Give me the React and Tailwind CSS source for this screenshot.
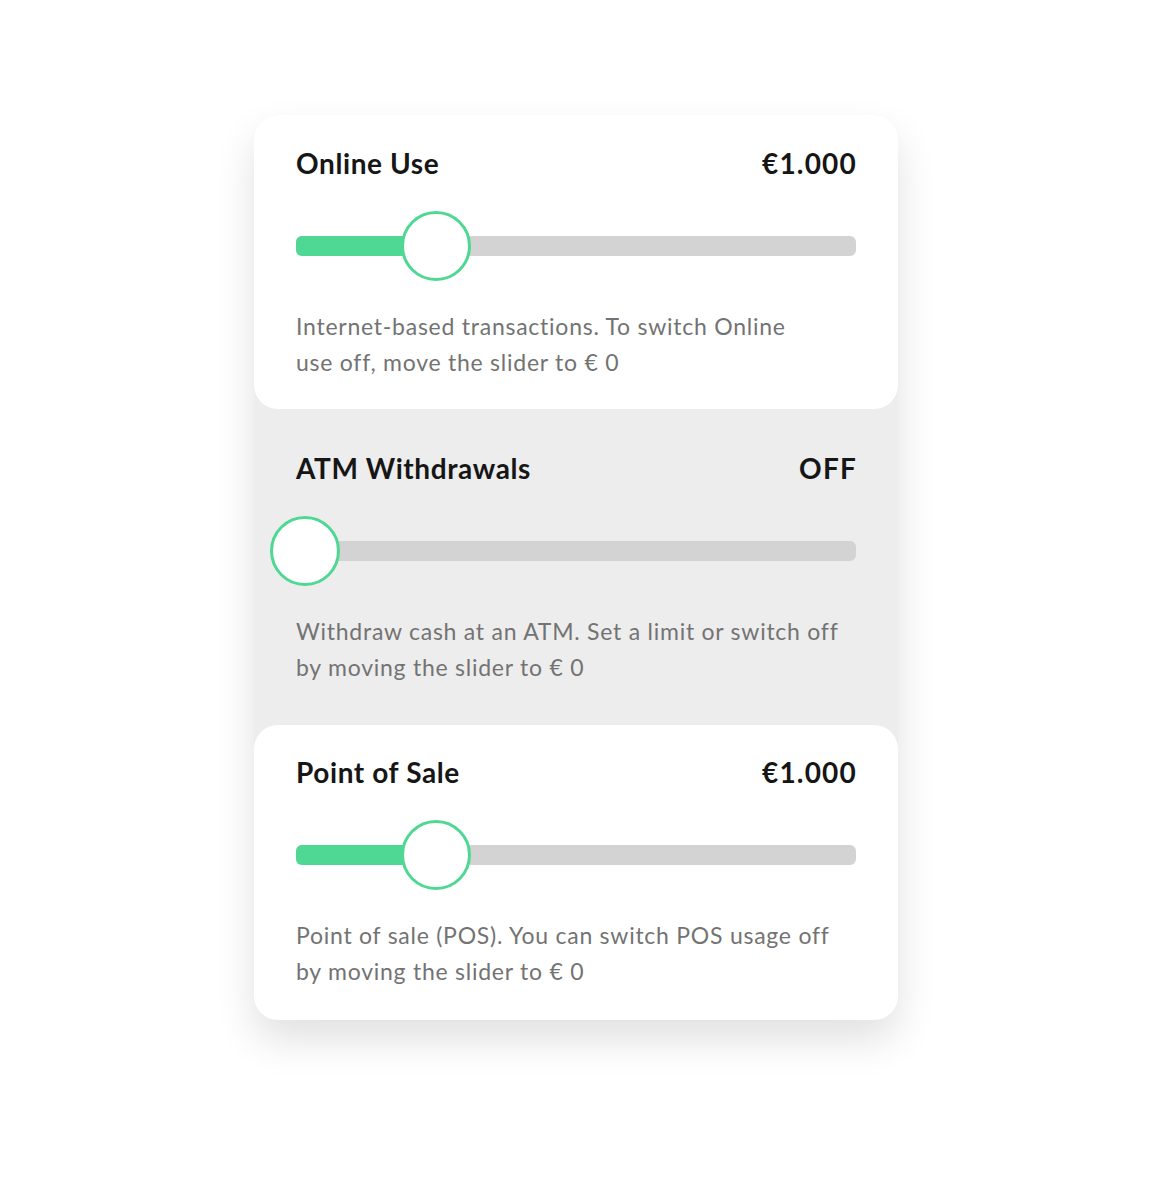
import React from 'react'

const sections = [
    {
        title: "Online Use",
        value: "€1.000",
        percent: 25,
        lines: ["Internet-based transactions. To switch Online", "use off, move the slider to € 0"],
        white: true,
        pad: "pt-[32px] pb-[29px]"
    },
    {
        title: "ATM Withdrawals",
        value: "OFF",
        percent: 0,
        lines: ["Withdraw cash at an ATM. Set a limit or switch off", "by moving the slider to € 0"],
        white: false,
        pad: "pt-[43px] pb-[40px]"
    },
    {
        title: "Point of Sale",
        value: "€1.000",
        percent: 25,
        lines: ["Point of sale (POS). You can switch POS usage off", "by moving the slider to € 0"],
        white: true,
        pad: "pt-[31px] pb-[31px]"
    }
];

function Slider({ percent }) {
    return (
        <div className="relative h-[70px] flex items-center">
            <div className="w-full h-[20px] rounded-[6px] bg-[#d3d3d3] overflow-hidden">
                <div className="h-full bg-[#4fd893]" style={{ width: `${percent}%` }} />
            </div>
            <div
                className="absolute top-0 w-[70px] h-[70px] rounded-full bg-white border-[3px] border-[#4fd893]"
                style={{ left: `calc(${percent}% - ${percent === 0 ? 26 : 35}px)` }}
            />
        </div>
    )
}

export default function App() {
    return (
        <div className="min-h-[1200px] bg-white pt-[115px] font-['Lato',sans-serif]">
            <div className="w-[644px] ml-[254px] rounded-[24px] bg-[#ededed] shadow-[0_20px_40px_rgba(0,0,0,0.12)]">
                {sections.map((s, i) => (
                    <div key={i} className={`px-[42px] ${s.pad} ${s.white ? "bg-white rounded-[24px]" : ""}`}>
                        <div className="flex items-center justify-between text-[28px] leading-[32px] font-bold tracking-[0.6px] text-[#161616]">
                            <span>{s.title}</span>
                            <span className="tracking-[1.2px] -mr-[1px]">{s.value}</span>
                        </div>
                        <div className="mt-[32px]">
                            <Slider percent={s.percent} />
                        </div>
                        <p className="mt-[27px] text-[23px] leading-[36px] tracking-[0.75px] text-[#737373] whitespace-nowrap">
                            {s.lines[0]}<br />{s.lines[1]}
                        </p>
                    </div>
                ))}
            </div>
        </div>
    )
}
